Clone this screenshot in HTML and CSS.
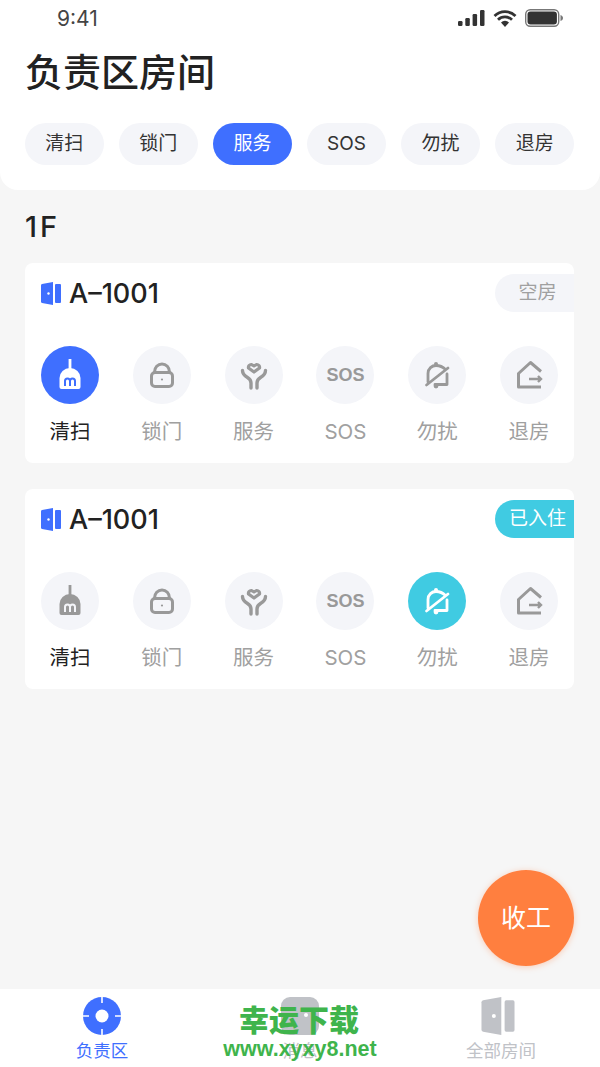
FILE: index.html
```html
<!DOCTYPE html>
<html lang="zh-CN">
<head>
    <meta charset="UTF-8">
    <meta name="viewport" content="width=device-width, initial-scale=1.0">
    <title>负责区房间</title>
    <link rel="stylesheet" href="styles.css">
</head>
<body>

    <!-- shared icons, center of the disc icons is 0,0 -->
    <svg class="icon-defs" aria-hidden="true">
        <symbol id="iconDoor" viewBox="0 0 20 23">
            <path d="M0 3.2Q0 2.2 1 2L12 0V23L1 21Q0 20.8 0 19.8Z" fill="currentColor"/>
            <rect x="14" y="2" width="6" height="19" rx="1" fill="currentColor"/>
            <circle cx="7.5" cy="11.5" r="1.2" fill="#fff"/>
        </symbol>
        <symbol id="iconBroom" viewBox="-29 -29 58 58">
            <path d="M-1.4 -16H1.4V-6H-1.4Z" fill="currentColor"/>
            <path d="M-10.500 12V3A10.500 10 0 0 1 10.500 3V12Q10.500 14 8.500 14H-8.500Q-10.500 14 -10.500 12Z" fill="currentColor"/>
            <path d="M-5 11V6A2.500 2.500 0 0 1 0 6V11M0 6A2.500 2.500 0 0 1 5 6V11" fill="none" stroke="var(--disc)" stroke-width="2"/>
        </symbol>
        <symbol id="iconLock" viewBox="-29 -29 58 58">
            <path d="M-7.500 -3A7.500 8 0 0 1 7.500 -3" fill="none" stroke="currentColor" stroke-width="3"/>
            <rect x="-10.500" y="-2.500" width="21" height="14" rx="3.500" fill="none" stroke="currentColor" stroke-width="3"/>
            <circle cx="0" cy="4.500" r="1.100" fill="currentColor"/>
        </symbol>
        <symbol id="iconCare" viewBox="-29 -29 58 58">
            <path d="M0 -3L-5.500 -7A2.800 2.800 0 0 1 -2.500 -10.500L0 -9L2.500 -10.500A2.800 2.800 0 0 1 5.500 -7Z" fill="none" stroke="currentColor" stroke-width="3.200" stroke-linejoin="round"/>
            <path d="M-11.500 -4.500C-11.500 -1 -9 1 -6.500 2.500C-4 4 -3 5.500 -3 8V13M11.500 -4.500C11.500 -1 9 1 6.500 2.500C4 4 3 5.500 3 8V13" fill="none" stroke="currentColor" stroke-width="3.400" stroke-linecap="round"/>
        </symbol>
        <symbol id="iconBell" viewBox="-29 -29 58 58">
            <path d="M-9 7V-1.500C-9 -6.500 -5 -9.500 -1 -9.500C3 -9.500 6 -8 8.500 -5.500M-10.500 10L11 -7M10 -1V9.500H-2" fill="none" stroke="currentColor" stroke-width="2.800" stroke-linecap="round" stroke-linejoin="round"/>
            <circle cx="-1" cy="-11" r="2" fill="currentColor"/>
            <circle cx="-1" cy="11" r="2.400" fill="currentColor"/>
        </symbol>
        <symbol id="iconLeave" viewBox="-29 -29 58 58">
            <path d="M12 -3.500L1.500 -12.500L-10.500 -1.500V12H12" fill="none" stroke="currentColor" stroke-width="3" stroke-linejoin="round"/>
            <path d="M0 4H12M9 1L12 4L9 7" fill="none" stroke="currentColor" stroke-width="2.400"/>
        </symbol>
    </svg>

    <div class="page">

        <!-- top area -->
        <header class="top-panel">
            <div class="status-bar">
                <span class="status-time">9:41</span>
                <div class="status-icons">
                    <svg width="27" height="16" viewBox="0 0 27 16">
                        <rect x="0" y="11" width="4.500" height="5" rx="1.200" fill="#333"/>
                        <rect x="7.300" y="8" width="4.500" height="8" rx="1.200" fill="#333"/>
                        <rect x="14.600" y="4" width="4.500" height="12" rx="1.200" fill="#333"/>
                        <rect x="22" y="0" width="4.500" height="16" rx="1.200" fill="#333"/>
                    </svg>
                    <svg width="24" height="17" viewBox="0 0 24 17">
                        <path d="M1.500 6A15 15 0 0 1 22.500 6M5 9.800A10 10 0 0 1 19 9.800" fill="none" stroke="#333" stroke-width="2.800"/>
                        <path d="M8 12.500A5.500 5.500 0 0 1 16 12.500L12 17Z" fill="#333"/>
                    </svg>
                    <svg width="38" height="18" viewBox="0 0 38 18">
                        <rect x="0.700" y="0.700" width="33" height="16.600" rx="4.500" fill="none" stroke="#777" stroke-width="1.400"/>
                        <rect x="2.500" y="2.500" width="29.400" height="13" rx="3" fill="#333"/>
                        <path d="M35.500 6V12C37 11.500 38 10.500 38 9C38 7.500 37 6.500 35.500 6Z" fill="#777"/>
                    </svg>
                </div>
            </div>
            <h1 class="page-title">负责区房间</h1>
            <div class="filter-row">
                <span class="filter-chip">清扫</span>
                <span class="filter-chip">锁门</span>
                <span class="filter-chip is-active">服务</span>
                <span class="filter-chip">SOS</span>
                <span class="filter-chip">勿扰</span>
                <span class="filter-chip">退房</span>
            </div>
        </header>

        <!-- rooms -->
        <main class="room-area">
            <h2 class="floor-name">1F</h2>

            <section class="room-card">
                <div class="room-head">
                    <div class="room-name">
                        <svg class="door-icon"><use href="#iconDoor"/></svg>
                        <span>A–1001</span>
                    </div>
                    <span class="room-badge">空房</span>
                </div>
                <div class="room-actions">
                    <div class="action is-selected">
                        <div class="action-disc disc-blue"><svg class="action-icon"><use href="#iconBroom"/></svg></div>
                        <span class="action-label">清扫</span>
                    </div>
                    <div class="action">
                        <div class="action-disc"><svg class="action-icon"><use href="#iconLock"/></svg></div>
                        <span class="action-label">锁门</span>
                    </div>
                    <div class="action">
                        <div class="action-disc"><svg class="action-icon"><use href="#iconCare"/></svg></div>
                        <span class="action-label">服务</span>
                    </div>
                    <div class="action">
                        <div class="action-disc"><span class="sos-mark">SOS</span></div>
                        <span class="action-label">SOS</span>
                    </div>
                    <div class="action">
                        <div class="action-disc"><svg class="action-icon"><use href="#iconBell"/></svg></div>
                        <span class="action-label">勿扰</span>
                    </div>
                    <div class="action">
                        <div class="action-disc"><svg class="action-icon"><use href="#iconLeave"/></svg></div>
                        <span class="action-label">退房</span>
                    </div>
                </div>
            </section>

            <section class="room-card">
                <div class="room-head">
                    <div class="room-name">
                        <svg class="door-icon"><use href="#iconDoor"/></svg>
                        <span>A–1001</span>
                    </div>
                    <span class="room-badge badge-in">已入住</span>
                </div>
                <div class="room-actions">
                    <div class="action is-selected">
                        <div class="action-disc"><svg class="action-icon"><use href="#iconBroom"/></svg></div>
                        <span class="action-label">清扫</span>
                    </div>
                    <div class="action">
                        <div class="action-disc"><svg class="action-icon"><use href="#iconLock"/></svg></div>
                        <span class="action-label">锁门</span>
                    </div>
                    <div class="action">
                        <div class="action-disc"><svg class="action-icon"><use href="#iconCare"/></svg></div>
                        <span class="action-label">服务</span>
                    </div>
                    <div class="action">
                        <div class="action-disc"><span class="sos-mark">SOS</span></div>
                        <span class="action-label">SOS</span>
                    </div>
                    <div class="action">
                        <div class="action-disc disc-cyan"><svg class="action-icon"><use href="#iconBell"/></svg></div>
                        <span class="action-label">勿扰</span>
                    </div>
                    <div class="action">
                        <div class="action-disc"><svg class="action-icon"><use href="#iconLeave"/></svg></div>
                        <span class="action-label">退房</span>
                    </div>
                </div>
            </section>
        </main>

        <button class="finish-button">收工</button>

        <!-- bottom tabs -->
        <nav class="tab-bar">
            <div class="tab is-current">
                <svg class="tab-icon" viewBox="0 0 38 38">
                    <circle cx="19" cy="19" r="19" fill="currentColor"/>
                    <circle cx="19" cy="19" r="6.500" fill="#fff"/>
                    <path d="M19 0V6M19 32V38M0 19H6M32 19H38" stroke="#fff" stroke-width="1.600"/>
                </svg>
                <span class="tab-label">负责区</span>
            </div>
            <div class="tab">
                <svg class="tab-icon" viewBox="0 0 38 38">
                    <rect width="38" height="38" rx="9" fill="currentColor"/>
                    <circle cx="13" cy="18" r="2" fill="#fff"/>
                    <circle cx="25" cy="18" r="2" fill="#fff"/>
                </svg>
                <span class="tab-label">消息</span>
            </div>
            <div class="tab">
                <svg class="tab-icon"><use href="#iconDoor"/></svg>
                <span class="tab-label label-shift">全部房间</span>
            </div>
            <div class="watermark">
                <span class="watermark-name">幸运下载</span>
                <span class="watermark-url">www.xyxy8.net</span>
            </div>
        </nav>
    </div>

</body>
</html>
```

FILE: styles.css
```css
body {
    margin: 0;
    font-family: Inter, "Noto Sans CJK SC", sans-serif;
    color: #333;
}

.icon-defs {
    display: none;
}

.page {
    position: relative;
    width: 600px;
    height: 1067px;
    overflow: hidden;
    display: flex;
    flex-direction: column;
    background-color: #f6f6f6;
}

/* top area */
.top-panel {
    padding: 0 26px 25px 25px;
    background-color: #fff;
    border-radius: 0 0 18px 18px;
}

.status-bar {
    height: 36px;
    display: flex;
    justify-content: space-between;
    align-items: center;
    padding: 0 11px 0 32px;
}

.status-time {
    font-size: 21px;
    color: #444;
}

.status-icons {
    display: flex;
    align-items: center;
    gap: 8px;
}

.page-title {
    margin: 13px 0 28px;
    font-size: 38px;
    line-height: 46px;
    font-weight: 500;
    color: #222;
}

.filter-row {
    display: flex;
    justify-content: space-between;
}

.filter-chip {
    width: 78.500px;
    height: 42px;
    line-height: 42px;
    text-align: center;
    font-size: 19px;
    background-color: #f4f5f9;
    border-radius: 21px;
}

.filter-chip.is-active {
    background-color: #3f6fff;
    color: #fff;
}

/* rooms */
.room-area {
    flex: 1;
    padding: 0 26px 0 25px;
}

.floor-name {
    margin: 21px 0 20px;
    font-size: 29px;
    line-height: 32px;
    font-weight: 500;
    letter-spacing: 3px;
    color: #222;
}

.room-card {
    margin-bottom: 26px;
    padding: 11px 0 17px;
    background-color: #fff;
    border-radius: 8px;
    overflow: hidden;
}

.room-head {
    display: flex;
    justify-content: space-between;
    align-items: center;
    height: 38px;
    padding-left: 16px;
}

.room-name {
    display: flex;
    align-items: center;
    gap: 8px;
    font-size: 27px;
    font-weight: 500;
    color: #222;
}

.door-icon {
    width: 20px;
    height: 23px;
    color: #3f6fff;
}

.room-badge {
    box-sizing: border-box;
    width: 79px;
    height: 38px;
    padding-left: 6px;
    line-height: 38px;
    text-align: center;
    font-size: 19px;
    color: #a0a0a0;
    background-color: #f4f5f9;
    border-radius: 19px 0 0 19px;
}

.room-badge.badge-in {
    color: #fff;
    background-color: #40cbe2;
}

.room-actions {
    display: flex;
    justify-content: space-between;
    margin-top: 34px;
    padding: 0 16px;
}

.action {
    width: 58px;
    display: flex;
    flex-direction: column;
    align-items: center;
    gap: 14px;
}

.action-disc {
    --disc: #f4f5f9;
    width: 58px;
    height: 58px;
    display: flex;
    justify-content: center;
    align-items: center;
    border-radius: 50%;
    color: #999;
    background-color: var(--disc);
}

.disc-blue {
    --disc: #3f6fff;
    color: #fff;
}

.disc-cyan {
    --disc: #40cbe2;
    color: #fff;
}

.action-icon {
    width: 58px;
    height: 58px;
}

.sos-mark {
    font-family: "Liberation Sans", sans-serif;
    font-size: 18px;
    font-weight: 700;
}

.action-label {
    font-size: 20.500px;
    line-height: 28px;
    color: #a0a0a0;
    white-space: nowrap;
}

.is-selected .action-label {
    color: #222;
}

.finish-button {
    position: absolute;
    left: 478px;
    top: 870px;
    width: 96px;
    height: 96px;
    padding: 0 0 4px;
    border: none;
    border-radius: 50%;
    font-family: inherit;
    font-size: 25px;
    color: #fff;
    background-color: #ff7f3f;
    box-shadow: 0 1px 6px rgba(255, 127, 63, 0.35);
}

/* bottom tabs */
.tab-bar {
    position: relative;
    height: 78px;
    display: grid;
    grid-template-columns: 204px 192px 204px;
    background-color: #fff;
}

.tab {
    display: flex;
    flex-direction: column;
    align-items: center;
    gap: 4px;
    padding-top: 8px;
    color: #c0c2c7;
}

.tab.is-current {
    color: #3f6fff;
}

.tab-icon {
    width: 38px;
    height: 38px;
}

.tab-label {
    font-size: 17.500px;
    line-height: 24px;
}

.label-shift {
    margin-left: 6px;
}

.watermark {
    position: absolute;
    left: 199px;
    top: 13px;
    width: 200px;
    display: flex;
    flex-direction: column;
    align-items: center;
    color: #3fb44c;
    font-weight: 900;
}

.watermark-name {
    font-size: 30px;
    line-height: 36px;
}

.watermark-url {
    margin-left: 2px;
    font-family: "Liberation Sans", sans-serif;
    font-size: 21.500px;
    font-weight: 700;
    line-height: 22px;
}
```
